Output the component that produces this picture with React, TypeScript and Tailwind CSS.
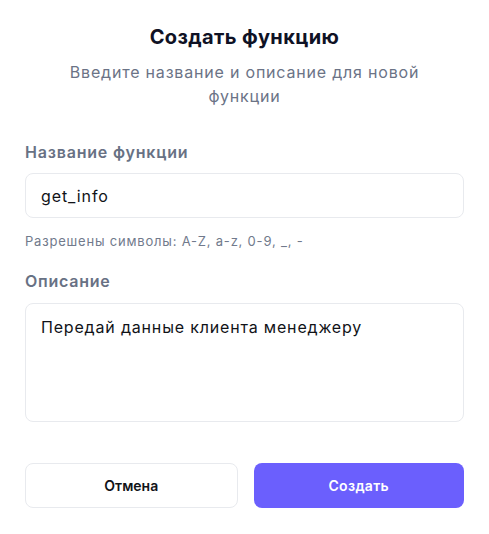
import { useState } from 'react';

export default function App() {
  const [name, setName] = useState('get_info');
  const [description, setDescription] = useState('Передай данные клиента менеджеру');

  return (
    <div className="w-[489px] h-[534px] bg-white px-[25px] pt-[24px] font-['Inter','Noto_Sans',sans-serif] antialiased">
      {/* Header */}
      <div className="flex flex-col items-center text-center">
        <h2 className="text-[20px] leading-[26px] font-bold tracking-[0.4px] text-[#0f1225]">Создать функцию</h2>
        <p className="mt-[10px] px-[20px] text-[16px] leading-[24px] tracking-[0.8px] text-[#6b7386]">
          Введите название и описание для новой функции
        </p>
      </div>

      {/* Name */}
      <div className="mt-[33px] flex flex-col">
        <label className="text-[16px] leading-[22px] font-semibold tracking-[0.8px] text-[#687184]">Название функции</label>
        <input
          value={name}
          onChange={(e) => setName(e.target.value)}
          className="mt-[10px] h-[45px] w-full rounded-[8px] border border-[#e8eaee] px-[15px] text-[16px] tracking-[0.9px] text-[#111318] outline-none"
        />
        <p className="mt-[14px] text-[13px] leading-[18px] tracking-[0.8px] text-[#717a8c]">Разрешены символы: A-Z, a-z, 0-9, _, -</p>
      </div>

      {/* Description */}
      <div className="mt-[20px] flex flex-col">
        <label className="text-[16px] leading-[22px] font-semibold tracking-[0.75px] text-[#687184]">Описание</label>
        <textarea
          value={description}
          onChange={(e) => setDescription(e.target.value)}
          className="mt-[11px] h-[119px] w-full resize-none rounded-[8px] border border-[#e8eaee] px-[15px] py-[11px] text-[16px] leading-[24px] tracking-[0.82px] text-[#111318] outline-none"
        />
      </div>

      {/* Actions */}
      <div className="mt-[41px] flex gap-[16px]">
        <button className="h-[45px] flex-1 rounded-[8px] border border-[#e8eaee] bg-white text-[14px] font-semibold text-[#111318]">
          Отмена
        </button>
        <button className="h-[45px] flex-1 rounded-[8px] bg-[#6b5ffd] text-[14px] font-semibold tracking-[0.3px] text-white">
          Создать
        </button>
      </div>
    </div>
  );
}
